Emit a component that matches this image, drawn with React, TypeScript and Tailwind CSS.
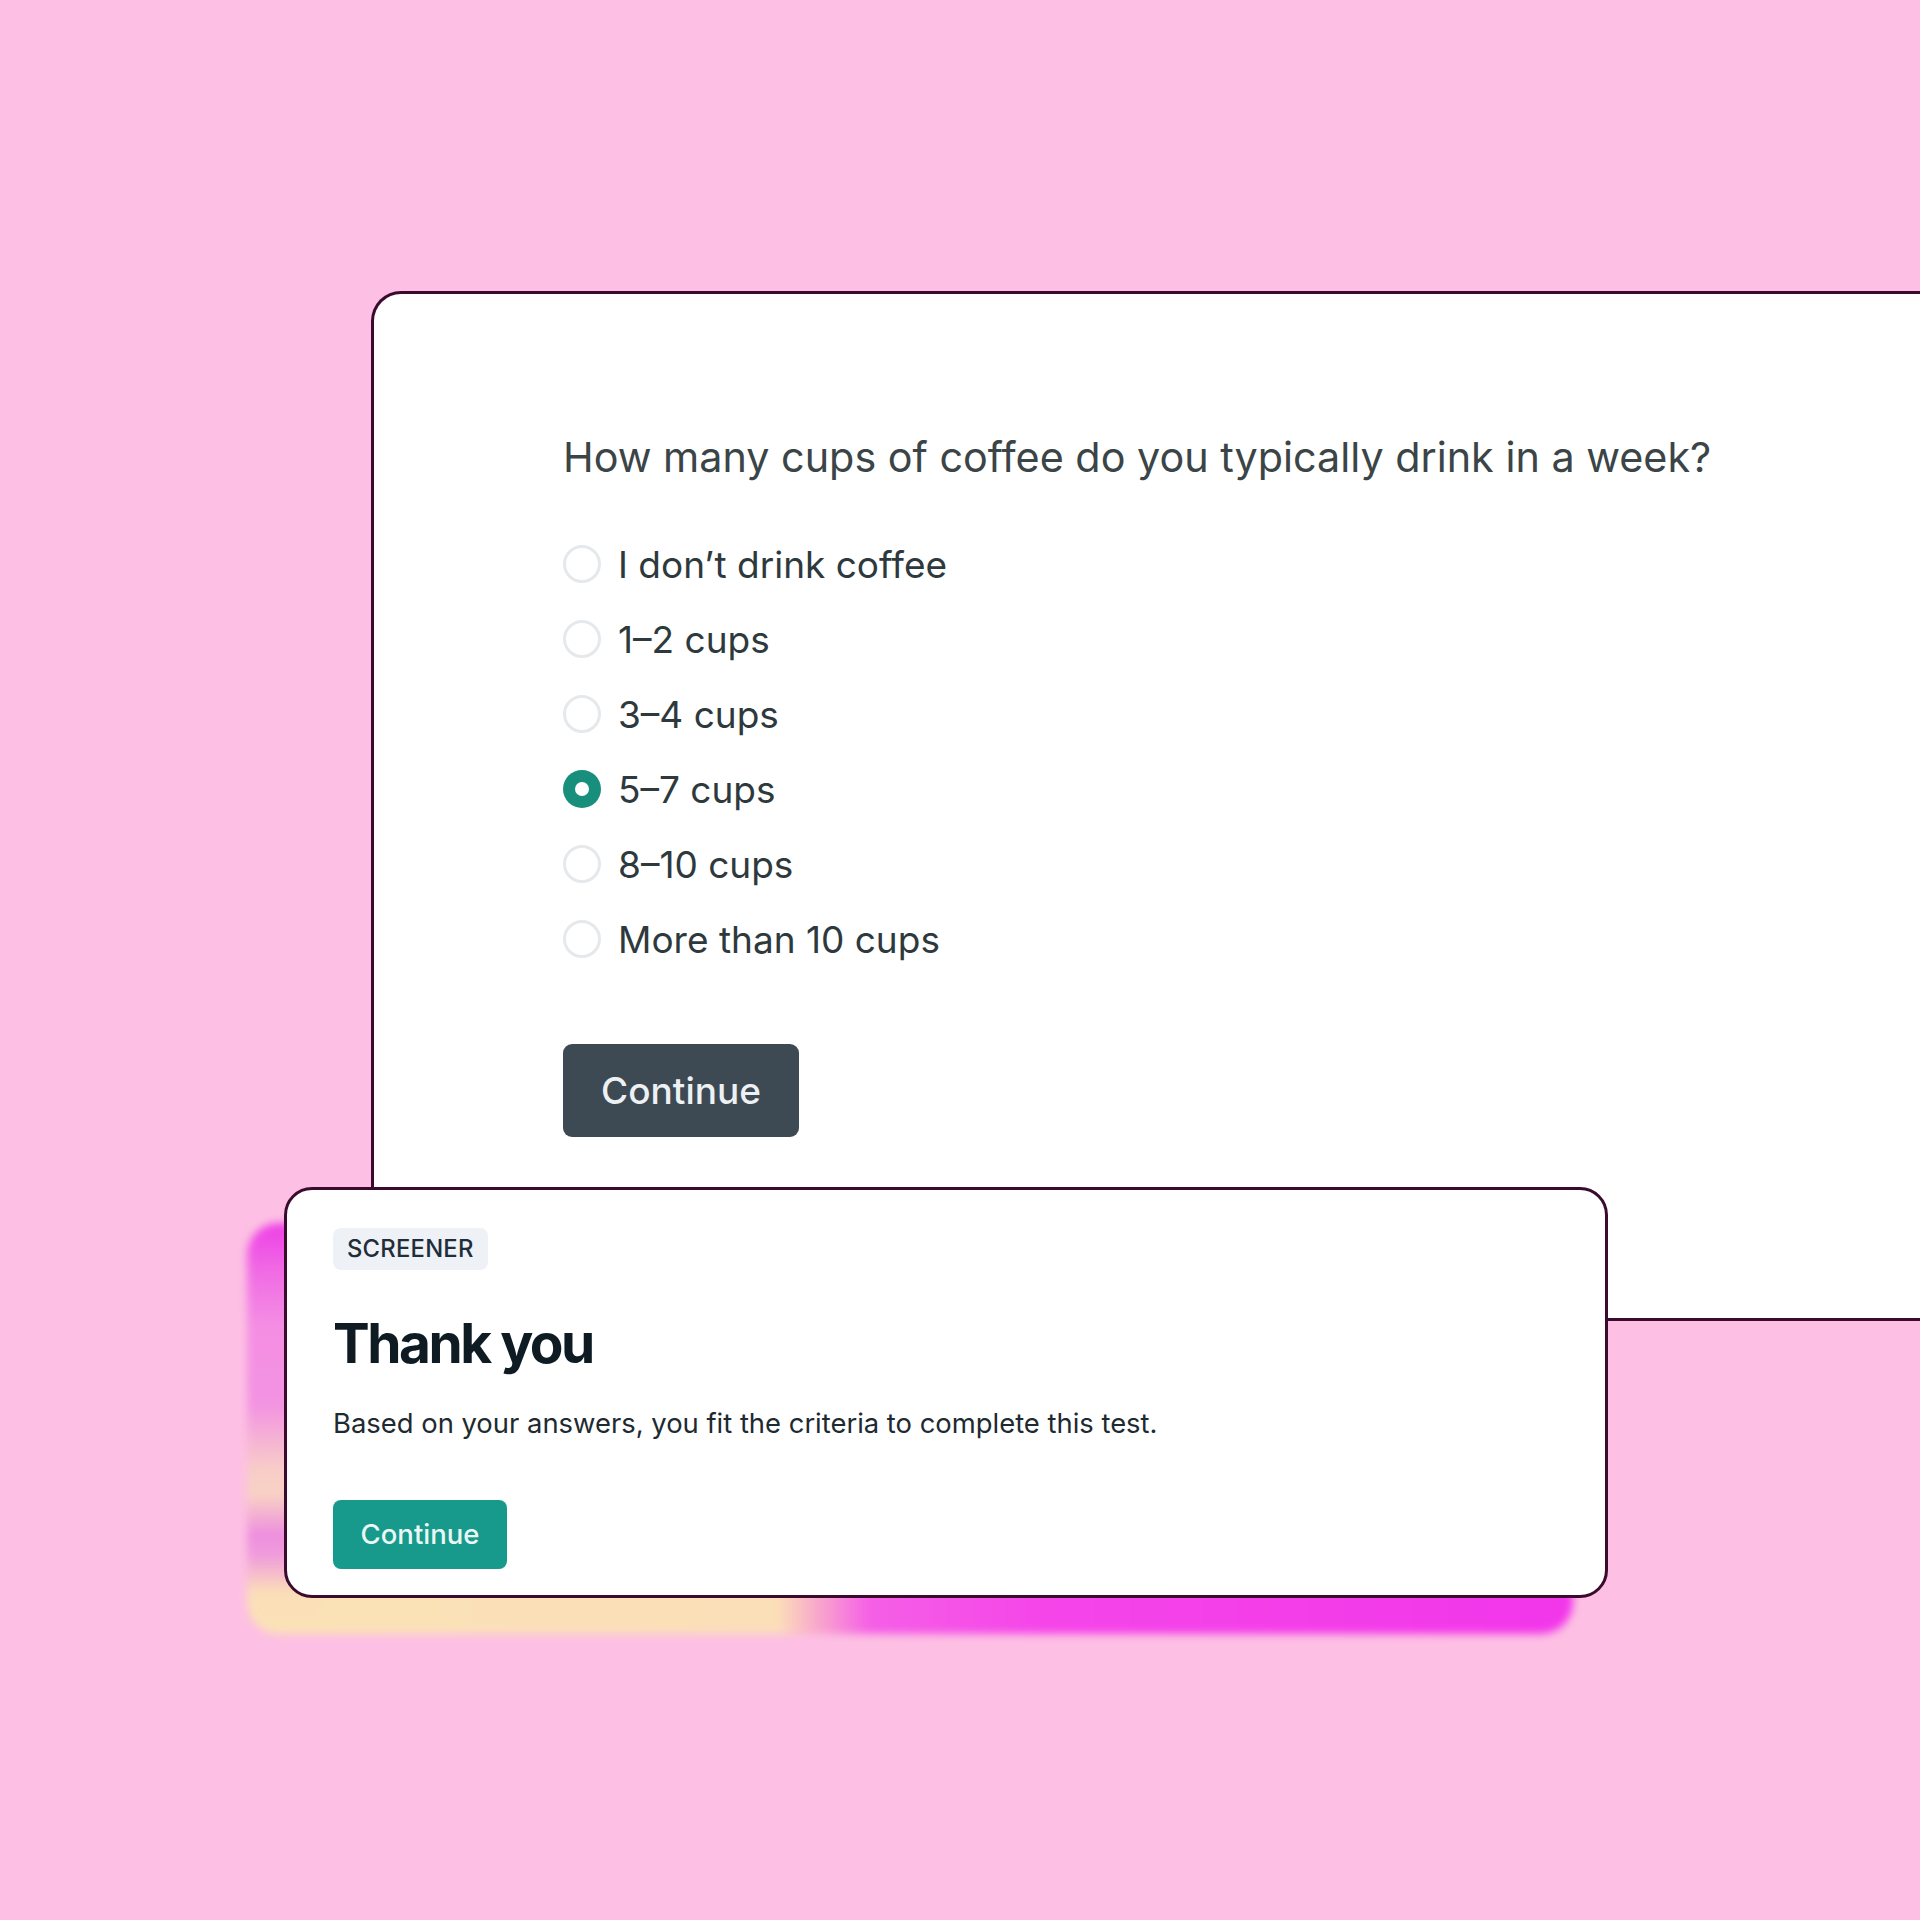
import React from "react";

const OPTIONS = [
  "I don’t drink coffee",
  "1–2 cups",
  "3–4 cups",
  "5–7 cups",
  "8–10 cups",
  "More than 10 cups",
];

const SELECTED = "5–7 cups";

function Radio({ checked }: { checked: boolean }) {
  if (checked) {
    return (
      <span className="flex h-[38px] w-[38px] shrink-0 items-center justify-center rounded-full bg-[#188e7c]">
        <span className="h-[14px] w-[14px] rounded-full bg-white" />
      </span>
    );
  }

  return (
    <span className="h-[38px] w-[38px] shrink-0 rounded-full border-[3px] border-[#e6e9eb] bg-white" />
  );
}

function QuestionCard() {
  return (
    <div className="ml-[371px] h-[1030px] w-[1620px] rounded-tl-[30px] border-[3px] border-r-0 border-[#3b0b2d] bg-white pl-[189px] pt-[139px]">
      <p className="text-[41.3px] leading-[49px] text-[#3b4447]">
        How many cups of coffee do you typically drink in a week?
      </p>

      <div className="mt-[63px] flex flex-col gap-[37px]">
        {OPTIONS.map((option) => (
          <label key={option} className="flex h-[38px] items-center gap-[17px]">
            <Radio checked={option === SELECTED} />
            <span className="text-[37px] leading-none text-[#2e393d]">{option}</span>
          </label>
        ))}
      </div>

      <button className="mt-[86px] flex h-[93px] w-[236px] items-center justify-center rounded-[9px] bg-[#3d4a54] text-[37px] font-medium text-[#eef1f3]">
        Continue
      </button>
    </div>
  );
}

function ResultCard() {
  return (
    <div className="relative ml-[284px] mt-[-134px] w-[1324px]">
      {/* soft gradient smear behind the card */}
      <div className="absolute left-[-37px] top-[36px] h-[411px] w-[1326px] rounded-[32px] bg-[linear-gradient(to_bottom,#ee3fe6_0%,#f06ce4_12%,#f48ee3_25%,#f393e2_44%,#f8cdc8_60%,#f8d2c4_66%,#ee8edf_76%,#f09ddc_81%,#fbdfb8_90%,#fbe2b6_100%),linear-gradient(to_right,#fbe2b6_0%,#fbdfb8_40%,#f55fe6_47%,#f545e9_60%,#f236ea_100%)] bg-[length:80px_100%,100%_100%] bg-no-repeat blur-[4px]" />

      <div className="relative h-[411px] rounded-[28px] border-[3px] border-[#3b0b2d] bg-white pl-[46px] pt-[38px]">
        <span className="inline-flex h-[42px] items-center rounded-[8px] bg-[#eef2f6] px-[14px] text-[23.8px] font-medium tracking-[0.01em] text-[#1f2e3a]">
          SCREENER
        </span>

        <h2 className="mt-[40px] text-[55px] font-bold leading-[66px] tracking-[-0.045em] text-[#0e1b23]">
          Thank you
        </h2>

        <p className="mt-[28px] text-[27.4px] leading-[39px] text-[#1d2a32]">
          Based on your answers, you fit the criteria to complete this test.
        </p>

        <button className="mt-[57px] flex h-[69px] w-[174px] items-center justify-center rounded-[8px] bg-[#179a8b] text-[27.5px] font-medium text-[#eaf7f5]">
          Continue
        </button>
      </div>
    </div>
  );
}

export default function App() {
  return (
    <div className="h-[1920px] w-[1920px] overflow-hidden bg-[#fdc0e4] pt-[291px] font-['Inter',sans-serif]">
      <QuestionCard />
      <ResultCard />
    </div>
  );
}
